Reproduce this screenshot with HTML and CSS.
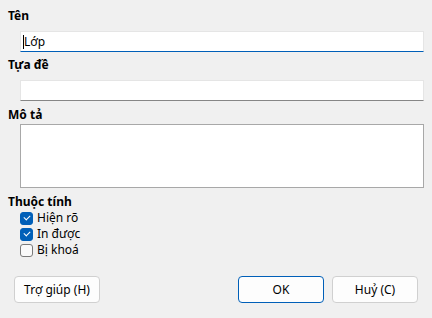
FILE: index.html
```html
<!DOCTYPE html>
<html lang="vi">
<head>
    <meta charset="UTF-8">
    <meta name="viewport" content="width=device-width, initial-scale=1.0">
    <title>Thuộc tính</title>
    <link rel="stylesheet" href="styles.css">
</head>
<body>
    <div class="dialog">
        <div class="label label-name">Tên</div>
        <div class="textbox textbox-focus"><span class="caret"></span>Lớp</div>

        <div class="label label-title">Tựa đề</div>
        <div class="textbox"></div>

        <div class="label label-desc">Mô tả</div>
        <div class="textarea"></div>

        <div class="label label-attr">Thuộc tính</div>
        <div class="checks">
            <div class="check-row"><span class="box checked"></span>Hiện rõ</div>
            <div class="check-row"><span class="box checked"></span>In được</div>
            <div class="check-row"><span class="box"></span>Bị khoá</div>
        </div>

        <div class="buttons">
            <button class="btn">Trợ giúp (H)</button>
            <div class="spacer"></div>
            <button class="btn btn-default">OK</button>
            <button class="btn">Huỷ (C)</button>
        </div>
    </div>
</body>
</html>
```

FILE: styles.css
```css
body {
    margin: 0;
    background-color: #f0f0f0;
    font-family: "Noto Sans", sans-serif;
    font-size: 12px;
    color: #000;
}
.dialog {
    width: 432px;
    height: 318px;
    padding: 8px 8px 0 8px;
    box-sizing: border-box;
    display: flex;
    flex-direction: column;
}
.label {
    font-weight: bold;
    line-height: 16px;
}
.label-title {
    margin-top: 5px;
}
.label-desc {
    margin-top: 6px;
}
.label-attr {
    margin-top: 6px;
}
.textbox {
    margin: 7px 0 0 12px;
    height: 21px;
    box-sizing: border-box;
    background: #fff;
    border: 1px solid #e5e5e5;
    border-bottom-color: #868686;
    padding: 0 2px;
    line-height: 19px;
    display: flex;
    align-items: center;
}
.textbox-focus {
    border-bottom-color: #005fb8;
}
.caret {
    width: 1px;
    height: 14px;
    background: #000;
    margin-right: 0;
}
.textarea {
    margin: 1px 0 0 12px;
    height: 64px;
    box-sizing: border-box;
    background: #fff;
    border: 1px solid #a8a8a8;
}
.checks {
    margin-left: 12px;
}
.check-row {
    display: flex;
    align-items: center;
    height: 16px;
    line-height: 16px;
}
.box {
    width: 13px;
    height: 13px;
    box-sizing: border-box;
    border: 1px solid #7a7a7a;
    border-radius: 3px;
    background: #fafafa;
    margin-right: 4px;
    position: relative;
}
.box.checked {
    background: #005fb8;
    border-color: #005fb8;
}
.box.checked::after {
    content: "";
    position: absolute;
    left: 3px;
    top: 2px;
    width: 5px;
    height: 3px;
    border-left: 1px solid #fff;
    border-bottom: 1px solid #fff;
    transform: rotate(-45deg);
}
.buttons {
    display: flex;
    margin: 18px 6px 0 6px;
    gap: 8px;
}
.spacer {
    flex: 1;
}
.btn {
    width: 86px;
    height: 27px;
    box-sizing: border-box;
    background: #fdfdfd;
    border: 1px solid #d0d0d0;
    border-radius: 4px;
    font-family: "Noto Sans", sans-serif;
    font-size: 12px;
    color: #000;
    padding: 0;
}
.btn-default {
    border-color: #005fb8;
}
```
